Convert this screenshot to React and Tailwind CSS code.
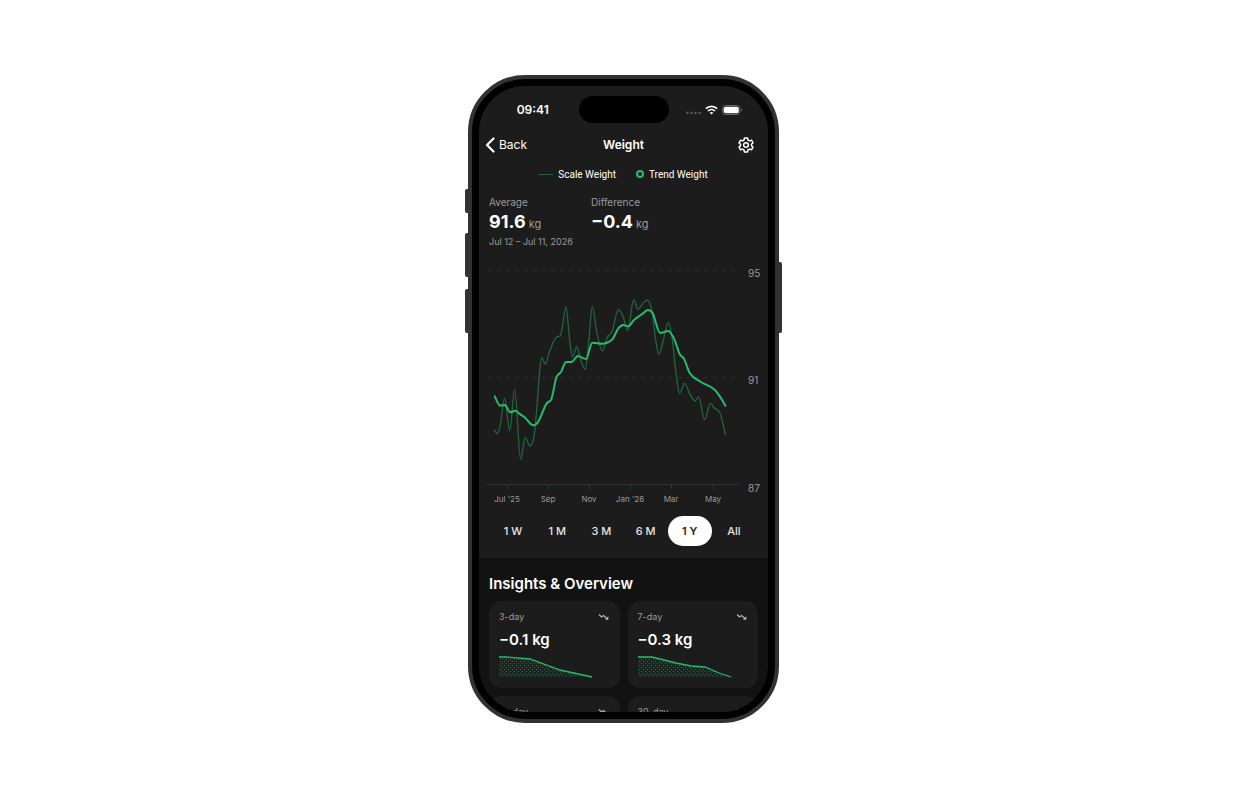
import React from 'react';

const scaleWeight = [
    [31, 511], [40, 521], [48, 500], [62, 415], [77, 512], [92, 389], [110, 598], [124, 532], [138, 558],
    [150, 530], [158, 450], [166, 345], [173, 292], [184, 313], [198, 270], [218, 231], [229, 227], [236, 195],
    [246, 139], [256, 230], [265, 291], [278, 260], [290, 300], [304, 328], [313, 260], [325, 139], [338, 215],
    [355, 273], [370, 232], [385, 212], [403, 148], [418, 172], [431, 212], [449, 119], [462, 148], [476, 131],
    [490, 120], [503, 150], [515, 240], [525, 283], [538, 240], [553, 187], [565, 240], [576, 340], [587, 400],
    [602, 370], [618, 403], [633, 423], [644, 411], [662, 479], [679, 430], [692, 445], [707, 457], [724, 524],
];

const trendWeight = [
    [32, 409], [48, 437], [62, 435], [79, 457], [94, 452], [106, 461], [122, 472], [148, 496], [162, 486],
    [188, 430], [201, 420], [218, 350], [231, 336], [246, 306], [262, 306], [282, 288], [306, 297], [325, 248],
    [355, 251], [384, 239], [403, 205], [418, 195], [432, 199], [450, 180], [476, 161], [492, 150], [505, 158],
    [528, 219], [553, 213], [570, 236], [588, 284], [600, 296], [617, 339], [651, 366], [692, 389], [708, 410],
    [724, 437],
];

const yTicks = [
    { label: '95', y: 15 },
    { label: '91', y: 122 },
    { label: '87', y: 230 },
];

const months = [
    { label: "Jul '25", x: 28 },
    { label: 'Sep', x: 69 },
    { label: 'Nov', x: 110 },
    { label: "Jan '26", x: 151 },
    { label: 'Mar', x: 192 },
    { label: 'May', x: 234 },
];

const ranges = ['1 W', '1 M', '3 M', '6 M', '1 Y', 'All'];

const insights = [
    { label: '3-day', value: '−0.1 kg', points: '0,1 7,1 31,3 61,14 93,21' },
    { label: '7-day', value: '−0.3 kg', points: '0,1 14,1 38,7 53,10 67,11 81,17 93,21' },
    { label: '14-day', value: '−0.5 kg', points: '0,1 20,3 45,9 70,15 93,21' },
    { label: '30-day', value: '−1.2 kg', points: '0,1 25,6 50,10 72,16 93,21' },
];

// Monotone cubic curve, so peaks stay on the data points
function smoothPath(pts) {
    const n = pts.length;
    const slopes = [];
    for (let i = 0; i < n - 1; i++) {
        slopes.push((pts[i + 1][1] - pts[i][1]) / (pts[i + 1][0] - pts[i][0]));
    }
    const m = pts.map((_, i) => {
        if (i === 0) return slopes[0];
        if (i === n - 1) return slopes[n - 2];
        const a = slopes[i - 1];
        const b = slopes[i];
        if (a * b <= 0) return 0;
        return Math.sign(a) * Math.min(2 * Math.abs(a), 2 * Math.abs(b), Math.abs(a + b) / 2);
    });
    let d = `M${pts[0][0]},${pts[0][1]}`;
    for (let i = 0; i < n - 1; i++) {
        const [x0, y0] = pts[i];
        const [x1, y1] = pts[i + 1];
        const h = (x1 - x0) / 3;
        d += `C${x0 + h},${y0 + m[i] * h} ${x1 - h},${y1 - m[i + 1] * h} ${x1},${y1}`;
    }
    return d;
}

function StatusBar() {
    return (
        <div className="grid grid-cols-[1fr_90px_1fr] items-center h-[47px]">
            <span className="text-center text-xs font-semibold pl-2">09:41</span>
            <div className="h-[27px] rounded-full bg-black" />
            <div className="flex items-center justify-end gap-1 pr-[26px]">
                <svg width="15" height="4" viewBox="0 0 15 4" className="mt-1.5" fill="#5c5c5c">
                    <circle cx="1.5" cy="2" r="1.2" />
                    <circle cx="5.5" cy="2" r="1.2" />
                    <circle cx="9.5" cy="2" r="1.2" />
                    <circle cx="13.5" cy="2" r="1.2" />
                </svg>
                <svg width="13" height="10" viewBox="0 0 13 10" fill="none" stroke="white" strokeWidth="1.7">
                    <path d="M0.8 3.7a8.2 8.2 0 0 1 11.4 0" />
                    <path d="M3 6a5 5 0 0 1 7 0" />
                    <path d="M6.5 9.6 4.7 7.8a2.6 2.6 0 0 1 3.6 0z" fill="white" stroke="none" />
                </svg>
                <svg width="20" height="10" viewBox="0 0 20 10" fill="none">
                    <rect x="0.5" y="0.5" width="17.5" height="9" rx="3" stroke="#666" />
                    <rect x="1.7" y="1.7" width="15.1" height="6.6" rx="2" fill="white" />
                    <path d="M19 3.5c1 .5 1 2.5 0 3z" fill="#888" />
                </svg>
            </div>
        </div>
    );
}

function Gear() {
    return (
        <svg width="16" height="16" viewBox="0 1 24 24" fill="none" stroke="white" strokeWidth="2.2" strokeLinejoin="round">
            <path d="M9.7 2.500h4.600l.7 3 2.200 1.300 3-1 2.300 4-2.300 2v2.400l2.300 2-2.300 4-3-1-2.200 1.300-.7 3H9.700l-.7-3-2.200-1.300-3 1-2.300-4 2.300-2v-2.400l-2.300-2 2.300-4 3 1L9 5.500z" />
            <circle cx="12" cy="13" r="3.500" />
        </svg>
    );
}

function WeightChart() {
    return (
        <svg viewBox="0 0 289 244" className="block w-full mt-[14px]" fontFamily="Inter, sans-serif">
            <g stroke="#2b2e2c" strokeDasharray="4 5">
                <line x1="9" y1="8.5" x2="260" y2="8.5" />
                <line x1="9" y1="115.5" x2="260" y2="115.5" />
            </g>
            <line x1="8" y1="222.5" x2="261" y2="222.5" stroke="#26332c" />
            <g fill="#9a9a9a" fontSize="10">
                {yTicks.map((tick) => (
                    <text key={tick.label} x="269" y={tick.y}>{tick.label}</text>
                ))}
            </g>
            {months.map((month) => (
                <g key={month.label}>
                    <line x1={month.x + 0.5} y1="223" x2={month.x + 0.5} y2="227" stroke="#2b3a32" />
                    <text x={month.x} y="240" fontSize="8" fill="#9a9a9a" textAnchor="middle">{month.label}</text>
                </g>
            ))}
            <g transform="translate(5 -2) scale(0.33333)" fill="none" strokeLinecap="round">
                <path d={smoothPath(scaleWeight)} stroke="#20653c" strokeWidth="4" />
                <path d={smoothPath(trendWeight)} stroke="#27bd68" strokeWidth="6" />
            </g>
        </svg>
    );
}

function InsightCard({ label, value, points }) {
    return (
        <div className="rounded-xl bg-[#1c1c1c] p-[10px]">
            <div className="flex items-center justify-between h-3">
                <span className="text-[9px] leading-3 text-[#9a9a9a]">{label}</span>
                <svg width="12" height="8" viewBox="0 0 12 8" fill="none" stroke="#b4b4b4" strokeWidth="1.2">
                    <path d="M1 1.5 3.5 4 5.5 2.5 9.5 6" />
                    <path d="M10.3 3.2v3.5H6.800z" fill="#b4b4b4" stroke="none" />
                </svg>
            </div>
            <p className="mt-[7px] text-[15px] leading-5 font-semibold">{value}</p>
            <svg width="94" height="22" viewBox="0 0 94 22" className="mt-1.5 block">
                <polygon points={`${points} 0,21`} fill="#1a2620" />
                <polygon points={`${points} 0,21`} fill="url(#dots)" />
                <polyline points={points} fill="none" stroke="#27bd68" strokeWidth="1.3" />
            </svg>
        </div>
    );
}

export default function App() {
    return (
        <div className="flex min-h-screen items-center justify-center bg-white pb-0.5 font-['Inter',sans-serif] text-white">
            {/* Phone frame */}
            <div className="relative h-[648px] w-[311px] rounded-[57px] bg-black border-4 border-[#303332] p-[7px]">
                <div className="absolute -left-[7px] top-[110px] h-6 w-[3px] rounded-l-xs bg-[#303332]" />
                <div className="absolute -left-[7px] top-[154px] h-11 w-[3px] rounded-l-xs bg-[#303332]" />
                <div className="absolute -left-[7px] top-[210px] h-11 w-[3px] rounded-l-xs bg-[#303332]" />
                <div className="absolute -right-[7px] top-[183px] h-[71px] w-[3px] rounded-r-xs bg-[#303332]" />

                <div className="h-full overflow-hidden rounded-[46px] bg-[#121212]">
                    <main className="bg-[#1c1c1c] pb-3">
                        <StatusBar />

                        <header className="grid grid-cols-3 items-center h-6 pl-1.5 pr-[14px]">
                            <button className="flex items-center gap-1 text-xs">
                                <svg width="10" height="16" viewBox="0 0 10 16" fill="none" stroke="white" strokeWidth="2.2" strokeLinecap="round" strokeLinejoin="round">
                                    <path d="M8.500 1.500 2 8l6.500 6.500" />
                                </svg>
                                Back
                            </button>
                            <h1 className="pl-2 text-center text-xs font-semibold">Weight</h1>
                            <button aria-label="Settings" className="justify-self-end">
                                <Gear />
                            </button>
                        </header>

                        {/* Legend */}
                        <div className="mt-[7px] flex h-5 items-center justify-center gap-5 font-['Roboto',sans-serif] text-[10px]">
                            <span className="flex items-center gap-[5px]">
                                <span className="h-px w-[14px] bg-[#20653c]" />
                                Scale Weight
                            </span>
                            <span className="flex items-center gap-[5px]">
                                <span className="size-2 rounded-full border-2 border-[#27bd68]" />
                                Trend Weight
                            </span>
                        </div>

                        {/* Stats */}
                        <div className="mt-3 flex pl-[10px] text-[#9a9a9a]">
                            <div className="w-[102px]">
                                <p className="text-[10px] leading-3">Average</p>
                                <p className="flex h-7 items-baseline gap-[3px] text-[11px]">
                                    <span className="text-lg leading-7 font-bold text-white">91.6</span> kg
                                </p>
                                <p className="text-[9px] leading-3 whitespace-nowrap">Jul 12 – Jul 11, 2026</p>
                            </div>
                            <div>
                                <p className="text-[10px] leading-3">Difference</p>
                                <p className="flex h-7 items-baseline gap-[3px] text-[11px]">
                                    <span className="text-lg leading-7 font-bold text-white">−0.4</span> kg
                                </p>
                            </div>
                        </div>

                        <WeightChart />

                        {/* Range picker */}
                        <div className="mt-[10px] grid grid-cols-6 px-3">
                            {ranges.map((range) => (
                                <button
                                    key={range}
                                    className={
                                        range === '1 Y'
                                            ? 'h-[30px] rounded-full bg-white text-[11px] font-semibold text-[#1c1c1c]'
                                            : 'h-[30px] rounded-full text-[11px] font-medium text-[#e4e4e4]'
                                    }
                                >
                                    {range}
                                </button>
                            ))}
                        </div>
                    </main>

                    <section className="px-[10px] pt-4">
                        <h2 className="text-[15px] leading-5 font-semibold">Insights &amp; Overview</h2>
                        <svg width="0" height="0" className="absolute">
                            <defs>
                                <pattern id="dots" width="4" height="4" patternUnits="userSpaceOnUse">
                                    <rect x="1" y="1" width="1" height="1" fill="#1f7a43" />
                                    <rect x="3" y="3" width="1" height="1" fill="#1f7a43" />
                                </pattern>
                            </defs>
                        </svg>
                        <div className="mt-[7px] grid grid-cols-2 gap-2">
                            {insights.map((item) => (
                                <InsightCard key={item.label} {...item} />
                            ))}
                        </div>
                    </section>
                </div>
            </div>
        </div>
    );
}
